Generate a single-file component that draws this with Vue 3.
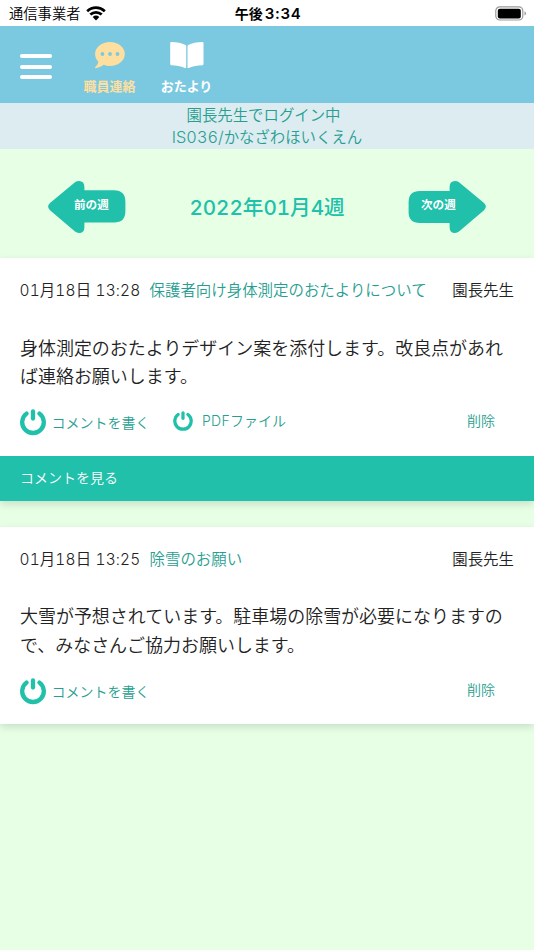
<script setup>
const posts = [
  {
    id: 1,
    date: '01月18日 13:28',
    title: '保護者向け身体測定のおたよりについて',
    author: '園長先生',
    body: ['身体測定のおたよりデザイン案を添付します。改良点があれ', 'ば連絡お願いします。'],
    pdf: true,
    comments: true,
  },
  {
    id: 2,
    date: '01月18日 13:25',
    title: '除雪のお願い',
    author: '園長先生',
    body: ['大雪が予想されています。駐車場の除雪が必要になりますの', 'で、みなさんご協力お願いします。'],
    pdf: false,
    comments: false,
  },
]
</script>

<template>
  <div class="screen">
    <div class="status">
      <div class="carrier">
        <span>通信事業者</span>
        <svg class="wifi" width="20" height="15" viewBox="0 0 20 15">
          <g fill="none" stroke="#000" stroke-width="2.7">
            <path d="M1.2 5.2C6.2 .5 13.8 .5 18.8 5.2" />
            <path d="M4.3 8.6C7.6 5.5 12.4 5.5 15.7 8.6" />
          </g>
          <path d="M6.7 11C8.7 9.1 11.3 9.1 13.3 11L10 14.4Z" fill="#000" />
        </svg>
      </div>
      <div class="clock">午後<span class="clock-num">3:34</span></div>
      <svg class="battery" width="32" height="15" viewBox="0 0 32 15">
        <rect x=".8" y=".8" width="27" height="13.2" rx="4" fill="none" stroke="#999" stroke-width="1.2" />
        <rect x="2.8" y="2.8" width="23" height="9.6" rx="2" fill="#000" />
        <path d="M29.5 5.3Q31 6 31 7.4T29.5 9.6Z" fill="#999" />
      </svg>
    </div>

    <header class="header">
      <div class="burger"><i></i><i></i><i></i></div>
      <div class="tab tab-active">
        <svg width="30" height="27" viewBox="0 0 30 27">
          <path d="M15 0C23.2 0 29.8 5.3 29.8 12S23.2 24 15 24C12.7 24 10.6 23.6 8.7 22.8C6.4 24.7 3.4 26 .3 26.2C-.2 26.2-.2 25.7.1 25.3C1.8 23.5 3 21.7 3.4 19.7C1.3 17.6.1 15 .1 12C.1 5.3 6.8 0 15 0Z" fill="#ffdf9f" />
          <g fill="#7bc9e1"><circle cx="7.4" cy="12" r="1.9" /><circle cx="15" cy="12" r="1.9" /><circle cx="22.5" cy="12" r="1.9" /></g>
        </svg>
        <span>職員連絡</span>
      </div>
      <div class="tab">
        <svg width="34" height="27" viewBox="0 0 34 27">
          <path d="M1.5 0C6.5.1 12 1 15.5 3C16 3.3 16.2 3.7 16.2 4.2V25.2C16.2 26 15.5 26.3 14.8 26C11 24.1 6 23.5 1.5 23.2C.7 23.1.2 22.6.2 21.9V1.2C.2.5.7 0 1.5 0ZM32.2 0C27.2.1 21.7 1 18.2 3C17.7 3.3 17.5 3.7 17.5 4.2V25.2C17.5 26 18.2 26.3 18.9 26C22.7 24.1 27.7 23.5 32.2 23.2C33 23.1 33.5 22.6 33.5 21.9V1.2C33.5.5 33 0 32.2 0Z" fill="#fff" />
        </svg>
        <span>おたより</span>
      </div>
    </header>

    <div class="login">
      <div class="login-user">園長先生でログイン中</div>
      <div><span class="num login-id">IS036/</span>かなざわほいくえん</div>
    </div>

    <nav class="weeks">
      <a class="arrow prev">
        <svg width="78" height="52" viewBox="0 0 78 52">
          <path d="M27 1.2Q28.8 0 31 0Q36.4 0 36.4 6V9.3H66Q77.4 9.3 77.4 21V30Q77.4 41.5 66 41.5H36.4V46Q36.4 52 31 52Q28.8 52 27 50.6L2 29.2Q-1.8 25.5 2 22Z" fill="#20c0aa" />
        </svg>
        <span>前の週</span>
      </a>
      <h1><span class="num">2022</span>年<span class="num">01</span>月<span class="num">4</span>週</h1>
      <a class="arrow next">
        <svg width="78" height="52" viewBox="0 0 78 52">
          <path transform="matrix(-1 0 0 1 78 0)" d="M27 1.2Q28.8 0 31 0Q36.4 0 36.4 6V10H66Q77.4 10 77.4 21V31Q77.4 42 66 42H36.4V46Q36.4 52 31 52Q28.8 52 27 50.6L2 29.2Q-1.8 25.5 2 22Z" fill="#20c0aa" />
        </svg>
        <span>次の週</span>
      </a>
    </nav>

    <article v-for="post in posts" :key="post.id" class="card">
      <div class="content">
        <div class="meta">
          <span class="num date">{{ post.date }}</span>
          <a class="title">{{ post.title }}</a>
          <span class="author">{{ post.author }}</span>
        </div>
        <div class="body">
          <div v-for="line in post.body" :key="line">{{ line }}</div>
        </div>
        <div class="actions">
          <svg class="power" width="26" height="27" viewBox="0 0 26 27">
            <path d="M6.5 4.6A10.8 10.8 0 1 0 19.5 4.6" />
            <path d="M13 2.4V9.6" />
          </svg>
          <a class="write">コメントを書く</a>
          <template v-if="post.pdf">
            <svg class="power small" width="20" height="20.5" viewBox="0 0 26 27">
              <path d="M6.5 4.6A10.8 10.8 0 1 0 19.5 4.6" />
              <path d="M13 2.4V9.6" />
            </svg>
            <a class="pdf"><span class="num">PDF</span>ファイル</a>
          </template>
          <a class="delete">削除</a>
        </div>
      </div>
      <div v-if="post.comments" class="comments">コメントを見る</div>
    </article>
  </div>
</template>

<style>
body { background: #e6ffe5; }
</style>

<style scoped>
.screen {
  width: 534px;
  height: 950px;
  overflow: hidden;
  background: #e6ffe5;
  font-family: "Noto Sans CJK JP", sans-serif;
  font-weight: 350;
  color: #222;
  white-space: nowrap;
}
.num { font-family: Inter, "Noto Sans CJK JP", sans-serif; font-variant-numeric: tabular-nums; }
.status {
  display: grid;
  grid-template-columns: 1fr auto 1fr;
  align-items: center;
  height: 26px;
  padding: 0 7px 0 9px;
  background: #fff;
  color: #000;
  font-size: 14.3px;
  line-height: 26px;
}
.carrier { display: flex; align-items: center; gap: 6px; }
.carrier span { margin-top: -2px; }
.clock { font-weight: 700; font-size: 14px; }
.clock-num { margin-left: 2px; font-family: Inter, sans-serif; font-weight: 600; font-size: 15px; letter-spacing: 0.7px; }
.battery { justify-self: end; }
.header {
  display: flex;
  align-items: flex-start;
  height: 77.4px;
  box-sizing: border-box;
  padding: 15.5px 20px 0;
  background: #7bc9e1;
}
.burger { display: grid; gap: 6.5px; width: 32px; margin: 12.5px 25px 0 0; }
.burger i { height: 4px; border-radius: 2px; background: #fff; }
.tab {
  display: flex;
  flex-direction: column;
  align-items: center;
  width: 65px;
  margin-right: 12px;
  color: #fff;
  font-size: 13px;
  font-weight: 700;
  line-height: 20px;
}
.tab span { margin-top: 7px; }
.tab svg { display: block; }
.tab-active { color: #ffdf9f; }
.login {
  box-sizing: border-box;
  height: 45.6px;
  padding-top: 0.8px;
  background: #dcecf1;
  color: #279e90;
  font-size: 15.4px;
  line-height: 21.5px;
  text-align: center;
}
.login-user { padding-right: 7px; }
.login-id { font-size: 16.3px; line-height: 1; }
.weeks {
  display: flex;
  align-items: center;
  justify-content: space-between;
  height: 109px;
  box-sizing: border-box;
  padding: 7px 48px 0;
}
.weeks h1 {
  margin: 0;
  color: #20c0aa;
  font-size: 20.6px;
  font-weight: 500;
  line-height: 30px;
}
.arrow { display: grid; color: #fff; font-size: 11.6px; font-weight: 700; line-height: 47px; }
.arrow > * { grid-area: 1 / 1; }
.arrow svg { display: block; }
.prev span { padding-left: 26px; }
.next span { padding-left: 13px; }
.card {
  margin-bottom: 26px;
  background: #fff;
  box-shadow: 0 3px 8px rgba(0, 0, 0, 0.13);
}
.content { height: 197.7px; box-sizing: border-box; padding: 19px 20px 0; }
.meta { display: flex; align-items: baseline; height: 24px; font-size: 15.45px; line-height: 24px; }
.date { width: 130px; margin-left: -0.5px; letter-spacing: 0.15px; }
.author { margin-left: auto; }
.title, .write, .pdf, .delete { color: #279e90; }
.body { margin-top: 31.7px; font-size: 17.98px; line-height: 28.5px; }
.actions { display: flex; height: 28px; margin-top: 18.3px; font-size: 14px; line-height: 28px; }
.power { margin: 1.5px 0 0 -0.5px; fill: none; stroke: #20c0aa; stroke-width: 4.3; stroke-linecap: round; }
.write { margin-left: 6px; }
.small { margin: 3.5px 0 0 23.5px; }
.pdf { margin: -2px 0 0 9px; }
.pdf .num { letter-spacing: 0.3px; }
.delete { margin: -2px 19px 0 auto; }
.comments { height: 45px; padding-left: 20px; background: #20c0aa; color: #fff; font-size: 14px; line-height: 42px; }
</style>
